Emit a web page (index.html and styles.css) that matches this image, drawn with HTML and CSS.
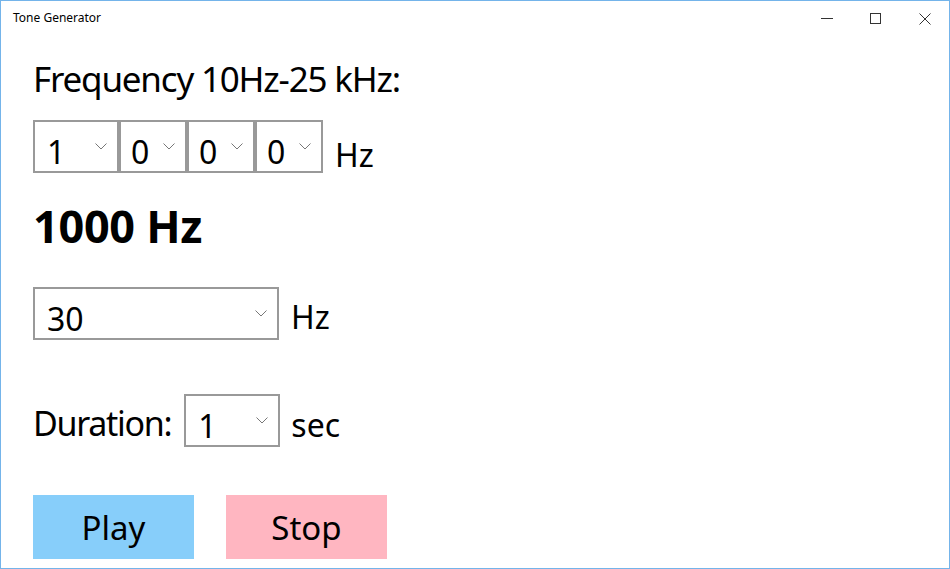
FILE: index.html
```html
<!DOCTYPE html>
<html lang="en">
<head>
<meta charset="utf-8">
<title>Tone Generator</title>
<link rel="stylesheet" href="styles.css">
</head>
<body>
<div class="window">
  <header class="titlebar">
    <span class="title">Tone Generator</span>
    <div class="controls">
      <span class="ctl"><svg width="12" height="12" viewBox="0 0 12 12"><line x1="0" y1="5.5" x2="12" y2="5.5" stroke="#333" stroke-width="1"/></svg></span>
      <span class="ctl"><svg width="12" height="12" viewBox="0 0 12 12"><rect x="0.5" y="0.5" width="10" height="10" fill="none" stroke="#333" stroke-width="1"/></svg></span>
      <span class="ctl"><svg width="12" height="12" viewBox="0 0 12 12"><path d="M0.5 0.5 L11.5 11.5 M11.5 0.5 L0.5 11.5" stroke="#333" stroke-width="1"/></svg></span>
    </div>
  </header>
  <main class="content">
    <div class="label">Frequency 10Hz-25 kHz:</div>
    <div class="row digits">
      <div class="combo w1"><span class="val">1</span><svg class="chev" width="12" height="7" viewBox="0 0 12 7"><polyline points="0.5,0.5 6,6 11.5,0.5" fill="none" stroke="#777" stroke-width="1"/></svg></div>
      <div class="combo w2"><span class="val">0</span><svg class="chev" width="12" height="7" viewBox="0 0 12 7"><polyline points="0.5,0.5 6,6 11.5,0.5" fill="none" stroke="#777" stroke-width="1"/></svg></div>
      <div class="combo w2"><span class="val">0</span><svg class="chev" width="12" height="7" viewBox="0 0 12 7"><polyline points="0.5,0.5 6,6 11.5,0.5" fill="none" stroke="#777" stroke-width="1"/></svg></div>
      <div class="combo w2"><span class="val">0</span><svg class="chev" width="12" height="7" viewBox="0 0 12 7"><polyline points="0.5,0.5 6,6 11.5,0.5" fill="none" stroke="#777" stroke-width="1"/></svg></div>
      <span class="unit unit-first">Hz</span>
    </div>
    <div class="freq">1000 Hz</div>
    <div class="row second">
      <div class="combo w3"><span class="val">30</span><svg class="chev" width="12" height="7" viewBox="0 0 12 7"><polyline points="0.5,0.5 6,6 11.5,0.5" fill="none" stroke="#777" stroke-width="1"/></svg></div>
      <span class="unit unit-second">Hz</span>
    </div>
    <div class="row duration">
      <span class="dlabel">Duration:</span>
      <div class="combo w4"><span class="val">1</span><svg class="chev" width="12" height="7" viewBox="0 0 12 7"><polyline points="0.5,0.5 6,6 11.5,0.5" fill="none" stroke="#777" stroke-width="1"/></svg></div>
      <span class="unit unit-sec">sec</span>
    </div>
    <div class="row buttons">
      <button class="btn play">Play</button>
      <button class="btn stop">Stop</button>
    </div>
  </main>
</div>
</body>
</html>
```
FILE: styles.css
```css
* { box-sizing: border-box; }
html, body { margin: 0; padding: 0; background: #fff; }
body { font-family: "Noto Sans", "Open Sans", sans-serif; color: #000; }

.window {
  width: 950px;
  height: 569px;
  border: 1px solid #74b4ea;
  background: #fff;
  overflow: hidden;
}

.titlebar {
  height: 31px;
  display: flex;
  align-items: center;
  justify-content: space-between;
}
.title {
  font-size: 12px;
  padding-left: 12px;
  padding-top: 2px;
  color: #000;
}
.controls { display: flex; height: 100%; }
.ctl {
  width: 49px;
  height: 100%;
  display: flex;
  align-items: center;
  justify-content: center;
  padding-top: 4px;
}

.content { padding-left: 32px; }

.label {
  font-size: 35px;
  line-height: 48px;
  margin-top: 23px;
  letter-spacing: -1.2px;
}

.row { display: flex; align-items: flex-start; }

.digits { margin-top: 17px; }
.combo {
  height: 53px;
  border: 2px solid #999;
  display: flex;
  align-items: center;
  justify-content: space-between;
  padding: 0 10px 0 12px;
  font-size: 32px;
  background: #fff;
}
.combo .val { padding-top: 10px; }
.w1 { width: 86px; }
.w2 { width: 68px; }
.w3 { width: 246px; }
.w4 { width: 96px; }
.digits .w2 { padding-left: 10px; }

.unit {
  font-size: 32px;
  margin-left: 12px;
  height: 53px;
  line-height: 53px;
}
.unit-first { padding-top: 8px; }
.unit-second { padding-top: 3px; }
.unit-sec { padding-top: 4px; margin-left: 11px; }

.freq {
  font-size: 45px;
  font-weight: bold;
  line-height: 56px;
  margin-top: 25px;
  letter-spacing: -0.3px;
}

.second { margin-top: 33px; }

.duration { margin-top: 54px; }
.dlabel {
  font-size: 34px;
  height: 53px;
  line-height: 53px;
  padding-top: 3px;
  margin-right: 13px;
  letter-spacing: -1.3px;
}

.buttons { margin-top: 48px; gap: 32px; }
.btn {
  width: 161px;
  height: 64px;
  border: none;
  font-family: "Noto Sans", "Open Sans", sans-serif;
  font-size: 33px;
  color: #000;
  padding: 1px 0 0 0;
}
.play { background: #87cefa; }
.stop { background: #ffb6c1; }
```
